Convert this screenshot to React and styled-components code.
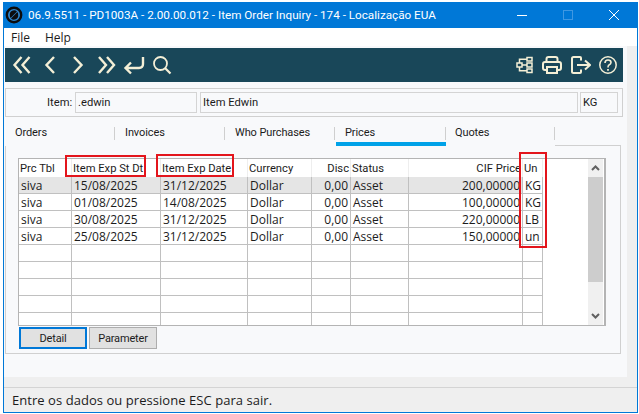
import React from "react";
import styled, { createGlobalStyle } from "styled-components";

const GlobalStyle = createGlobalStyle`
  html, body {
    margin: 0;
    padding: 0;
    background: #fff;
    overflow: hidden;
  }
  body {
    font-family: Roboto, "Liberation Sans", sans-serif;
    font-size: 11.2px;
    color: #1c1c1c;
  }
`;

const Page = styled.div`
  width: 639px;
  height: 414px;
  padding: 2px 1px 1px 3px;
  box-sizing: border-box;
`;

const Window = styled.div`
  position: relative;
  height: 100%;
  display: flex;
  flex-direction: column;
  border: 1px solid #0078d7;
  border-top: 0;
  box-sizing: border-box;
  background: #efefef;
`;

const TitleBar = styled.div`
  height: 26px;
  flex: none;
  display: flex;
  align-items: center;
  padding-left: 1px;
  background: #0078d7;
  color: #fff;
`;

const TitleText = styled.span`
  margin-left: 5px;
  font-size: 11.7px;
  flex: 1;
  white-space: nowrap;
`;

const WinButton = styled.span`
  width: 46px;
  height: 26px;
  flex: none;
  display: flex;
  align-items: center;
  justify-content: center;
`;

const MenuBar = styled.div`
  height: 18px;
  flex: none;
  display: flex;
  gap: 15px;
  align-items: center;
  padding-left: 7px;
  background: #fff;
  font-family: "Open Sans", sans-serif;
  font-size: 12px;
`;

const Client = styled.div`
  height: 331px;
  width: 623px;
  flex: none;
  box-sizing: border-box;
  padding: 2px 0 0 1px;
  background: #f8f9fb;
`;

const Toolbar = styled.div`
  width: 618px;
  height: 34px;
  display: flex;
  align-items: center;
  padding: 0 1px 0 3px;
  box-sizing: border-box;
  background: #194759;
`;

const ToolGap = styled.div`
  flex: 1;
`;

const ToolButton = styled.span`
  width: 28px;
  height: 34px;
  flex: none;
  display: flex;
  align-items: center;
  justify-content: center;
  svg {
    display: block;
    fill: none;
    stroke: #f4efd6;
    stroke-width: 2.4;
  }
`;

const ItemPanel = styled.div`
  width: 618px;
  height: 29px;
  margin-top: 6px;
  box-sizing: border-box;
  border: 1px solid #d0d0d0;
  display: flex;
  align-items: center;
  padding-left: 41px;
`;

const ItemLabel = styled.label`
  width: 28px;
  flex: none;
`;

const ItemInput = styled.div`
  width: ${(p) => p.$width}px;
  height: 21px;
  flex: none;
  margin-right: ${(p) => p.$gap}px;
  box-sizing: border-box;
  border: 1px solid #d4d4d4;
  padding-left: 2px;
  line-height: 20px;
  white-space: nowrap;
`;

const TabBar = styled.div`
  display: flex;
  height: 29px;
  width: 618px;
`;

const Tab = styled.div`
  position: relative;
  width: 110px;
  flex: none;
  box-sizing: border-box;
  padding: 7px 0 0 10px;
  font-size: 11px;
  letter-spacing: -0.1px;
  line-height: 17px;
  &::after {
    content: "";
    position: absolute;
    right: 0;
    top: 10px;
    width: 1px;
    height: 13px;
    background: #cfcfcf;
  }
  ${(p) =>
    p.$active &&
    `
    box-shadow: inset 0 -4px 0 #00a2e8;
    margin-left: 1px;
    padding-left: 9px;
    margin-right: -1px;
  `}
`;

const TabFill = styled.div`
  flex: 1;
  border-bottom: 1px solid #d0d0d0;
  margin-right: 2px;
`;

const TabPanel = styled.div`
  width: 616px;
  height: 208px;
  box-sizing: border-box;
  border: 1px solid #d0d0d0;
  border-top: 0;
  padding: 12px 0 0 12px;
`;

const Browse = styled.div`
  width: 588px;
  height: 168px;
  display: flex;
  box-sizing: border-box;
  border: 1px solid #b4b4b4;
  border-right-width: 2px;
  background: #fff;
`;

const GridWrap = styled.div`
  flex: 1;
  overflow: hidden;
`;

const Grid = styled.table`
  border-collapse: separate;
  border-spacing: 0;
  table-layout: fixed;
  width: 524px;
`;

const HeadCell = styled.th`
  height: 18px;
  padding: 0 1px;
  box-sizing: border-box;
  font-weight: 400;
  line-height: 15px;
  text-align: ${(p) => (p.$right ? "right" : "left")};
  border-right: 1px solid #eee;
  white-space: nowrap;
  overflow: hidden;
`;

const Cell = styled.td`
  height: 17px;
  padding: 0 2px;
  box-sizing: border-box;
  font-family: "Open Sans", sans-serif;
  font-size: 12px;
  line-height: 15px;
  text-align: ${(p) => (p.$right ? "right" : "left")};
  background: ${(p) => (p.$selected ? "#e5e5e5" : "#fff")};
  border-right: 1px solid #c0c0c0;
  border-bottom: 1px solid #c0c0c0;
  white-space: nowrap;
  overflow: hidden;
`;

const Scrollbar = styled.div`
  width: 15px;
  margin-right: 1px;
  flex: none;
  display: flex;
  flex-direction: column;
  background: #f0f0f0;
`;

const ScrollArrow = styled.div`
  height: 18px;
  flex: none;
  display: flex;
  align-items: center;
  justify-content: center;
  svg {
    fill: none;
    stroke: #606060;
    stroke-width: 2;
  }
`;

const ScrollThumb = styled.div`
  height: 105px;
  background: #cdcdcd;
`;

const ScrollFill = styled.div`
  flex: 1;
`;

const ButtonRow = styled.div`
  display: flex;
  gap: 2px;
  margin: 1px 0 0 1px;
`;

const ActionButton = styled.button`
  width: 68px;
  height: 22px;
  padding: 0;
  font: inherit;
  font-size: 11px;
  letter-spacing: -0.15px;
  color: #1c1c1c;
  box-sizing: border-box;
  background: #e1e1e1;
  border: ${(p) => (p.$focused ? "2px solid #0078d7" : "1px solid #adadad")};
`;

const StatusBar = styled.div`
  margin-top: 10px;
  flex: 1;
  box-sizing: border-box;
  border-top: 1px solid #d4d4d4;
  padding: 3px 0 0 8px;
  font-family: "Open Sans", sans-serif;
  font-size: 13px;
  letter-spacing: 0.05px;
  line-height: 18px;
  white-space: nowrap;
`;

const Mark = styled.div`
  position: absolute;
  left: ${(p) => p.$x - 4}px;
  top: ${(p) => p.$y - 2}px;
  width: ${(p) => p.$w}px;
  height: ${(p) => p.$h}px;
  box-sizing: border-box;
  border: 2px solid #e3151c;
  pointer-events: none;
`;

const Icon = ({ w = 20, h = 20, children }) => (
  <svg width={w} height={h} viewBox={`0 0 ${w} ${h}`}>
    {children}
  </svg>
);

const Logo = () => (
  <svg width="18" height="18" viewBox="0 0 18 18">
    <circle cx="9" cy="9" r="7.2" fill="#2f86cc" stroke="#0c0c0c" strokeWidth="2.4" />
    <path d="M4.8 9 A4.2 4.2 0 0 1 12 5.6 L5.6 12 A4.2 4.2 0 0 1 4.8 9 Z" fill="#0c0c0c" />
    <path d="M13.2 9 A4.2 4.2 0 0 1 6 12.4 L12.4 6 A4.2 4.2 0 0 1 13.2 9 Z" fill="#0c0c0c" />
  </svg>
);

const columns = [
  { label: "Prc Tbl", width: 53 },
  { label: "Item Exp St Dt", width: 89 },
  { label: "Item Exp Date", width: 87 },
  { label: "Currency", width: 64 },
  { label: "Disc", width: 39, right: true },
  { label: "Status", width: 58 },
  { label: "CIF Price", width: 114, right: true },
  { label: "Un", width: 20 },
];

const rows = [
  ["siva", "15/08/2025", "31/12/2025", "Dollar", "0,00", "Asset", "200,00000", "KG"],
  ["siva", "01/08/2025", "14/08/2025", "Dollar", "0,00", "Asset", "100,00000", "KG"],
  ["siva", "30/08/2025", "31/12/2025", "Dollar", "0,00", "Asset", "220,00000", "LB"],
  ["siva", "25/08/2025", "31/12/2025", "Dollar", "0,00", "Asset", "150,00000", "un"],
  ["", "", "", "", "", "", "", ""],
  ["", "", "", "", "", "", "", ""],
  ["", "", "", "", "", "", "", ""],
  ["", "", "", "", "", "", "", ""],
  ["", "", "", "", "", "", "", ""],
];

const tabs = ["Orders", "Invoices", "Who Purchases", "Prices", "Quotes"];

export default function App() {
  return (
    <Page>
      <GlobalStyle />
      <Window>
        <TitleBar>
          <Logo />
          <TitleText>
            06.9.5511 - PD1003A - 2.00.00.012 - Item Order Inquiry - 174 - Localização EUA
          </TitleText>
          <WinButton>
            <svg width="10" height="10"><path d="M0 5.5H10" stroke="#fff" /></svg>
          </WinButton>
          <WinButton>
            <svg width="10" height="10"><rect x="0.5" y="0.5" width="9" height="9" fill="none" stroke="#3f98e2" /></svg>
          </WinButton>
          <WinButton>
            <svg width="10" height="10"><path d="M0 0L10 10M10 0L0 10" stroke="#fff" /></svg>
          </WinButton>
        </TitleBar>
        <MenuBar>
          <span>File</span>
          <span>Help</span>
        </MenuBar>
        <Client>
          <Toolbar>
            <ToolButton><Icon><path d="M9.5 2 L2.5 10 L9.5 18 M17.5 2 L10.5 10 L17.5 18" /></Icon></ToolButton>
            <ToolButton><Icon><path d="M14 2 L6.5 10 L14 18" /></Icon></ToolButton>
            <ToolButton><Icon><path d="M6 2 L13.5 10 L6 18" /></Icon></ToolButton>
            <ToolButton><Icon><path d="M3 2 L10 10 L3 18 M11 2 L18 10 L11 18" /></Icon></ToolButton>
            <ToolButton><Icon w={22}><path d="M20 2 V9 Q20 13 16 13 H3 M8 7.5 L2.5 13 L8 18.5" /></Icon></ToolButton>
            <ToolButton><Icon><g strokeWidth="1.8"><circle cx="8.5" cy="8.5" r="6.5" /><path d="M13 13 L18.5 18.5" strokeWidth="2.2" /></g></Icon></ToolButton>
            <ToolGap />
            <ToolButton>
              <Icon>
                <g strokeWidth="1.5">
                  <rect x="3" y="8" width="5" height="4" />
                  <rect x="13" y="2.5" width="5" height="3.5" />
                  <rect x="13" y="8" width="5" height="4" />
                  <rect x="13" y="14" width="5" height="3.5" />
                  <path d="M5.5 8 V4.2 H13 M8 10 H13 M5.5 12 V15.8 H13" />
                </g>
              </Icon>
            </ToolButton>
            <ToolButton>
              <Icon>
                <g strokeWidth="2">
                  <path d="M4.5 7 V4 Q4.5 2 6.5 2 H13.5 Q15.5 2 15.5 4 V7 M4.5 15 H3 Q1 15 1 13 V9 Q1 7 3 7 H17 Q19 7 19 9 V13 Q19 15 17 15 H15.5 M5 12 H15 V18 H5 Z" />
                </g>
              </Icon>
            </ToolButton>
            <ToolButton>
              <Icon w={22}>
                <g strokeWidth="2">
                  <path d="M12 5.5 V3 Q12 2 11 2 H4.5 Q3 2 3 3.5 V16.5 Q3 18 4.5 18 H11 Q12 18 12 17 V14.5 M8 10 H21 M16 5.5 L21 10 L16 14.5" />
                </g>
              </Icon>
            </ToolButton>
            <ToolButton>
              <Icon>
                <circle cx="10" cy="10" r="8.2" strokeWidth="1.5" />
                <path d="M7 8 Q7 5 10 5 Q13 5 13 7.5 Q13 9 11 10 Q10 10.5 10 12.5" strokeWidth="1.6" />
                <path d="M10 14 V15.8" strokeWidth="1.8" />
              </Icon>
            </ToolButton>
          </Toolbar>
          <ItemPanel>
            <ItemLabel>Item:</ItemLabel>
            <ItemInput $width={122} $gap={3}>.edwin</ItemInput>
            <ItemInput $width={378} $gap={2}>Item Edwin</ItemInput>
            <ItemInput $width={38} $gap={0}>KG</ItemInput>
          </ItemPanel>
          <TabBar>
            {tabs.map((t) => (
              <Tab key={t} $active={t === "Prices"}>{t}</Tab>
            ))}
            <TabFill />
          </TabBar>
          <TabPanel>
            <Browse>
              <GridWrap>
                <Grid>
                  <colgroup>
                    {columns.map((c) => (
                      <col key={c.label} width={c.width} />
                    ))}
                  </colgroup>
                  <thead>
                    <tr>
                      {columns.map((c) => (
                        <HeadCell key={c.label} $right={c.right}>{c.label}</HeadCell>
                      ))}
                    </tr>
                  </thead>
                  <tbody>
                    {rows.map((r, i) => (
                      <tr key={i}>
                        {r.map((v, j) => (
                          <Cell key={j} $right={columns[j].right} $selected={i === 0 && j < 7}>{v}</Cell>
                        ))}
                      </tr>
                    ))}
                  </tbody>
                </Grid>
              </GridWrap>
              <Scrollbar>
                <ScrollArrow><svg width="9" height="6"><path d="M1 5 L4.5 1.5 L8 5" /></svg></ScrollArrow>
                <ScrollThumb />
                <ScrollFill />
                <ScrollArrow><svg width="9" height="6"><path d="M1 1 L4.5 4.5 L8 1" /></svg></ScrollArrow>
              </Scrollbar>
            </Browse>
            <ButtonRow>
              <ActionButton $focused>Detail</ActionButton>
              <ActionButton>Parameter</ActionButton>
            </ButtonRow>
          </TabPanel>
        </Client>
        <StatusBar>Entre os dados ou pressione ESC para sair.</StatusBar>
        <Mark $x={65} $y={155} $w={81} $h={22} />
        <Mark $x={156} $y={154} $w={78} $h={23} />
        <Mark $x={519} $y={152} $w={28} $h={96} />
      </Window>
    </Page>
  );
}
